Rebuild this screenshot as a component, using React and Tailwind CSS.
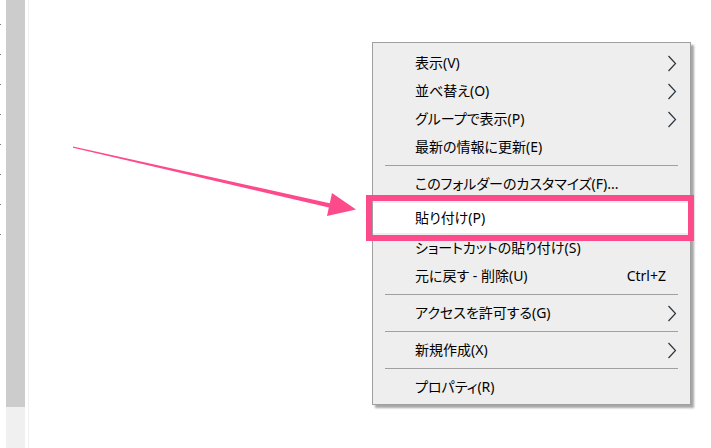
import React from "react";

const font = { };

function Chevron() {
  return (
    <svg width="10" height="17" viewBox="0 0 10 17" className="block">
      <polyline points="1.5,1 8.5,8.5 1.5,16" fill="none" stroke="#2b3540" strokeWidth="1.2" />
    </svg>
  );
}

function Row({ label, sub, shortcut, h = "h-[28px]", extra = "" }) {
  return (
    <div className={`flex items-center ${h} pl-[42px] pr-[13px] ${extra}`}>
      <span className="flex-1 text-[14px] leading-none text-black">{label}</span>
      {shortcut && <span className="text-[14px] leading-none text-black mr-[11px]">{shortcut}</span>}
      {sub && <Chevron />}
    </div>
  );
}

function Sep() {
  return (
    <div className="h-[9px] pt-[4px] pl-[12px] pr-[12px]">
      <div className="h-px bg-[#a0a0a0]" />
    </div>
  );
}

export default function App() {
  const dots = [24, 54, 84, 114, 144, 174, 204, 234];
  return (
    <div
      className="relative w-[711px] h-[448px] bg-white overflow-hidden flex [font-feature-settings:'palt']"
      style={{ fontFamily: '"Noto Sans", "Noto Sans CJK JP", sans-serif' }}
    >
      <div className="w-[6px] h-full flex flex-col pt-[24px] gap-[29px]">
        {dots.map((d) => (
          <div key={d} className="w-px h-px bg-[#7a7a7a]" />
        ))}
      </div>
      <div className="w-[19px] h-full flex flex-col">
        <div className="flex-1 bg-[#cccccc]" />
        <div className="h-[41px] bg-[#f0f0f0]" />
      </div>
      <div className="w-[3px] h-full" />
      <div className="w-px h-full bg-[#f0f0f0]" />
      <div className="flex-1 h-full" />

      {/* context menu */}
      <div className="absolute left-[372px] top-[42px] w-[319px] border border-[#a0a0a0] bg-[#eeeeee] pt-[6px] pb-[3px] shadow-[3px_3px_2px_rgba(0,0,0,0.35)]">
        <Row label="表示(V)" sub />
        <Row label="並べ替え(O)" sub />
        <Row label="グループで表示(P)" sub />
        <Row label="最新の情報に更新(E)" />
        <Sep />
        <Row label="このフォルダーのカスタマイズ(F)..." />
        <Row label="貼り付け(P)" h="h-[30px]" extra="mt-[5px] bg-white" />
        <Row label="ショートカットの貼り付け(S)" h="h-[29px]" />
        <Row label="元に戻す - 削除(U)" shortcut="Ctrl+Z" />
        <Sep />
        <Row label="アクセスを許可する(G)" sub />
        <Sep />
        <Row label="新規作成(X)" sub />
        <Sep />
        <Row label="プロパティ(R)" />
      </div>

      {/* pink highlight box */}
      <div className="absolute left-[366px] top-[195px] w-[328px] h-[46px] border-[6px] border-[#fd4a8b]" />

      {/* arrow */}
      <svg className="absolute left-0 top-0" width="711" height="448" viewBox="0 0 711 448">
        <polygon points="73,146.5 73,147.8 331,208 333,204" fill="#fd4a8b" />
        <polygon points="332,193 356,209.5 327,216" fill="#fd4a8b" />
      </svg>
    </div>
  );
}
